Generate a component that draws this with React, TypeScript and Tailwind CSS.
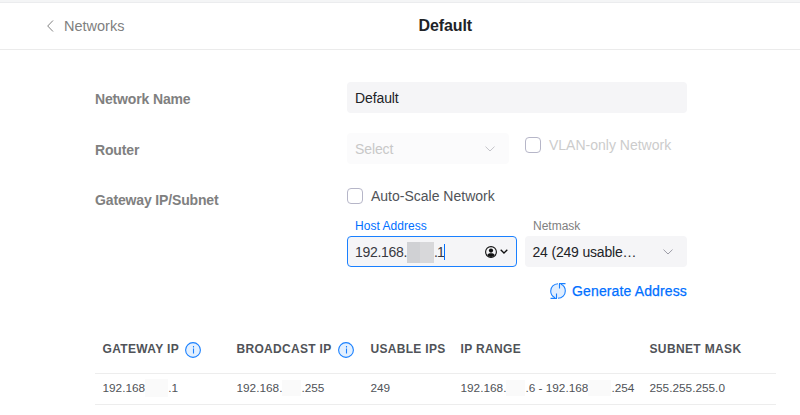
import React from "react";

function Chevron({ className }: { className?: string }) {
  return (
    <svg className={className} width="10" height="6" viewBox="0 0 10 6" fill="none" stroke="currentColor">
      <path d="M0.5 0.6 5 5 9.5 0.6" />
    </svg>
  );
}

function Checkbox() {
  return <span className="block size-4 shrink-0 rounded-[4px] border border-[#b6b6c8] bg-white" />;
}

function InfoIcon() {
  return (
    <svg className="shrink-0" width="16" height="16" viewBox="0 0 16 16" fill="none">
      <circle cx="8" cy="8" r="7.4" fill="#e3f0ff" stroke="#1a80ff" strokeWidth="1.1" />
      <path d="M8.5 6.5v5M8.5 4v1.5" stroke="#1a80ff" strokeWidth="1.1" />
    </svg>
  );
}

function RefreshIcon() {
  return (
    <svg className="shrink-0" width="16" height="16" viewBox="0 0 16 16" fill="none" stroke="#1a80ff" strokeWidth="1.1">
      <circle cx="8" cy="8" r="7" fill="#e0eeff" stroke="none" />
      <path d="M8 .7C3.8.8.7 4 .7 8c0 2.9 1.5 5.4 4.3 6.7M8 15.3c4.2-.1 7.3-3.3 7.3-7.3 0-2.9-1.5-5.4-4.3-6.7" />
      <path d="M9.5 5.6V.6h6M6.5 10.4v5h-6" />
    </svg>
  );
}

function AccountIcon() {
  return (
    <svg width="12" height="12" viewBox="0 0 12 12" fill="none">
      <circle cx="6" cy="6" r="5.4" stroke="#111" strokeWidth="1.1" />
      <circle cx="6" cy="4.6" r="2.1" fill="#111" />
      <path d="M2.2 9C3 7.5 4.4 7.2 6 7.2S9 7.5 9.8 9C8.8 10.3 7.5 10.9 6 10.9S3.2 10.3 2.2 9Z" fill="#111" />
    </svg>
  );
}

function Mask({ className }: { className: string }) {
  return <span className={"inline-block shrink-0 bg-[#fafafa] " + className} />;
}

const label = "w-[252px] shrink-0 text-sm font-bold tracking-[-0.15px] text-[#808080] leading-4";

export default function App() {
  return (
    <div className="h-[415px] w-[800px] overflow-hidden bg-white font-['Liberation_Sans',Arial,sans-serif] text-[#212327]">
      <div className="h-[3px] border-b border-[#ebecee] bg-[#f4f5f6]" />
      <header className="grid h-[47px] grid-cols-[418.5px_1fr] items-center border-b border-[#ebebeb]">
        <div className="flex items-center pl-[47px] text-[14.5px] leading-5 text-[#808080]">
          <svg width="7" height="12" viewBox="0 0 7 12" fill="none" stroke="currentColor">
            <path d="M6 .5.7 6 6 11.5" />
          </svg>
          <span className="pl-[10px]">Networks</span>
        </div>
        <h1 className="text-base font-bold leading-5 tracking-[-0.1px]">Default</h1>
      </header>

      <main className="pl-[95px] pt-8">
        <div className="flex h-[31px] items-center">
          <div className={label + " pt-[2px]"}>Network Name</div>
          <div className="flex h-[31px] w-[340px] items-center rounded-[4px] bg-[#f5f5f7] px-2 text-sm tracking-[-0.1px]">Default</div>
        </div>

        <div className="mt-5 flex h-[31px] items-center">
          <div className={label + " pt-[2px]"}>Router</div>
          <div className="flex h-[31px] w-[162px] items-center justify-between rounded-[4px] bg-[#fbfbfc] pl-2 pr-[14px] text-sm text-[#c8c8c8]">
            <span className="tracking-[-0.1px]">Select</span>
            <Chevron className="text-[#c4c4ca]" />
          </div>
          <div className="mb-2 ml-4 flex items-center gap-2 text-sm text-[#cccccc]">
            <Checkbox />
            <span>VLAN-only Network</span>
          </div>
        </div>

        <div className="mt-6 flex h-[111px]">
          <div className={label + " pt-1"}>Gateway IP/Subnet</div>
          <div className="w-[340px]">
            <div className="flex h-4 items-center gap-2 text-sm text-[#505358]">
              <Checkbox />
              <span>Auto-Scale Network</span>
            </div>
            <div className="mt-[15px] flex gap-2">
              <div className="w-[170px]">
                <div className="h-[17px] pl-2 text-xs leading-[14px] tracking-[0.04px] text-[#006fff]">Host Address</div>
                <div className="flex h-[31px] items-center rounded-[4px] border border-[#1a80ff] bg-[#f5f5f7] pl-[7px] pr-2 text-sm text-[#38393f]">
                  <span className="w-[52px] tracking-[-0.3px]">192.168.</span>
                  <span className="mt-[2px] flex h-[21px] w-[27px]">
                    <span className="w-[13px] bg-[#d0d1d4]" />
                    <span className="w-[14px] bg-[#d8d8da]" />
                  </span>
                  <span className="w-[10px] tracking-[-0.8px]">.1</span>
                  <span className="h-4 w-px bg-[#006fff]" />
                  <span className="ml-auto flex items-center gap-[3px]">
                    <AccountIcon />
                    <svg width="8" height="5" viewBox="0 0 8 5" fill="none" stroke="#111" strokeWidth="1.3">
                      <path d="M.7.7 4 4 7.3.7" />
                    </svg>
                  </span>
                </div>
              </div>
              <div className="w-[162px]">
                <div className="h-[17px] pl-2 text-xs leading-[14px] text-[#808080]">Netmask</div>
                <div className="flex h-[31px] items-center justify-between rounded-[4px] bg-[#f5f5f7] pl-[7.5px] pr-[14px] text-sm">
                  <span className="tracking-[-0.18px]">24 (249 usable…</span>
                  <Chevron className="text-[#9c9ca6]" />
                </div>
              </div>
            </div>
            <div className="mt-4 flex items-center justify-end gap-[6px] text-sm leading-4 text-[#006fff]">
              <RefreshIcon />
              <span className="tracking-[0.13px] [-webkit-text-stroke:0.25px_#006fff]">Generate Address</span>
            </div>
          </div>
        </div>

        <div className="mt-[27px] w-[681px]">
          <div className="grid h-[48px] grid-cols-[134px_134px_90px_189px_1fr] items-center border-b border-[#ededed] pl-[7.5px] text-xs font-bold text-[#505358]">
            <div className="flex items-center gap-[6px]"><span className="pb-px tracking-[0.34px]">GATEWAY IP</span><InfoIcon /></div>
            <div className="flex items-center gap-[6px]"><span className="pb-px tracking-[0.31px]">BROADCAST IP</span><InfoIcon /></div>
            <span className="pb-px tracking-[0.3px]">USABLE IPS</span>
            <span className="pb-px tracking-[0.34px]">IP RANGE</span>
            <span className="pb-px tracking-[0.36px]">SUBNET MASK</span>
          </div>
          <div className="grid h-[31px] grid-cols-[134px_134px_90px_189px_1fr] items-center border-b border-[#ededed] pb-[2px] pl-[7.5px] text-[11.8px] leading-4 text-[#505358]">
            <div className="flex items-center"><span>192.168</span><Mask className="h-[18px] w-[23px]" /><span>.1</span></div>
            <div className="flex items-center"><span>192.168.</span><Mask className="h-4 w-[19px]" /><span>.255</span></div>
            <span>249</span>
            <div className="flex items-center whitespace-pre"><span>192.168.</span><Mask className="h-4 w-[19px]" /><span>.6 - 192.168</span><Mask className="h-4 w-[23px]" /><span>.254</span></div>
            <span>255.255.255.0</span>
          </div>
        </div>
      </main>
    </div>
  );
}
